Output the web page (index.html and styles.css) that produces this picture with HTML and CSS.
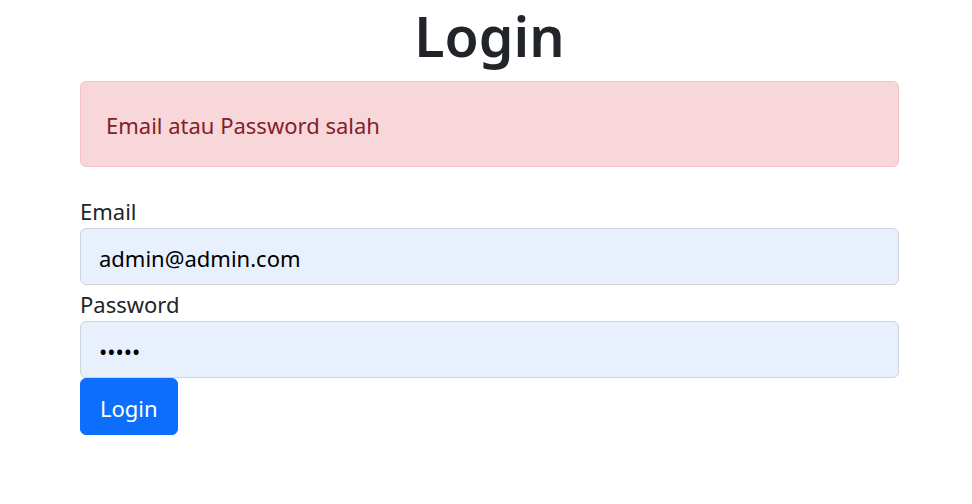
FILE: index.html
```html
<!DOCTYPE html>
<html lang="id">
<head>
<meta charset="utf-8">
<title>Login</title>
<link rel="stylesheet" href="styles.css">
</head>
<body>
<div class="container">
  <h1 class="title">Login</h1>
  <div class="alert">Email atau Password salah</div>
  <form class="form">
    <label class="label" for="email">Email</label>
    <input class="control" id="email" type="text" value="admin@admin.com">
    <label class="label" for="password">Password</label>
    <input class="control" id="password" type="password" value="admin">
    <button class="btn" type="button">Login</button>
  </form>
</div>
</body>
</html>
```
FILE: styles.css
```css
* { box-sizing: border-box; }
html, body { margin: 0; padding: 0; background: #fff; }
body {
  font-family: "Noto Sans", "Open Sans", sans-serif;
  font-size: 22px;
  line-height: 36px;
  color: #212529;
}
.container {
  width: 819px;
  margin-left: 80px;
}
.title {
  margin: 0 0 9px;
  font-size: 55.5px;
  font-weight: 600;
  line-height: 72px;
  text-align: center;
}
.alert {
  background: #f8d7da;
  border: 1px solid #f5c2c7;
  color: #842029;
  border-radius: 6px;
  padding: 25px 25px 23px;
  margin-bottom: 25px;
}
.form { display: flex; flex-direction: column; align-items: flex-start; }
.label { display: block; line-height: 36px; padding-top: 1px; margin-bottom: -1px; }
.control {
  display: block;
  width: 100%;
  height: 57px;
  padding: 10px 18px 8px;
  font: inherit;
  color: #000;
  background: #e8f0fe;
  border: 1px solid #ced4da;
  border-radius: 6px;
  outline: none;
}
.btn {
  font: inherit;
  color: #fff;
  background: #0d6efd;
  border: 1px solid #0d6efd;
  border-radius: 6px;
  height: 57px;
  padding: 10px 19px 8px;
  cursor: pointer;
}
```
